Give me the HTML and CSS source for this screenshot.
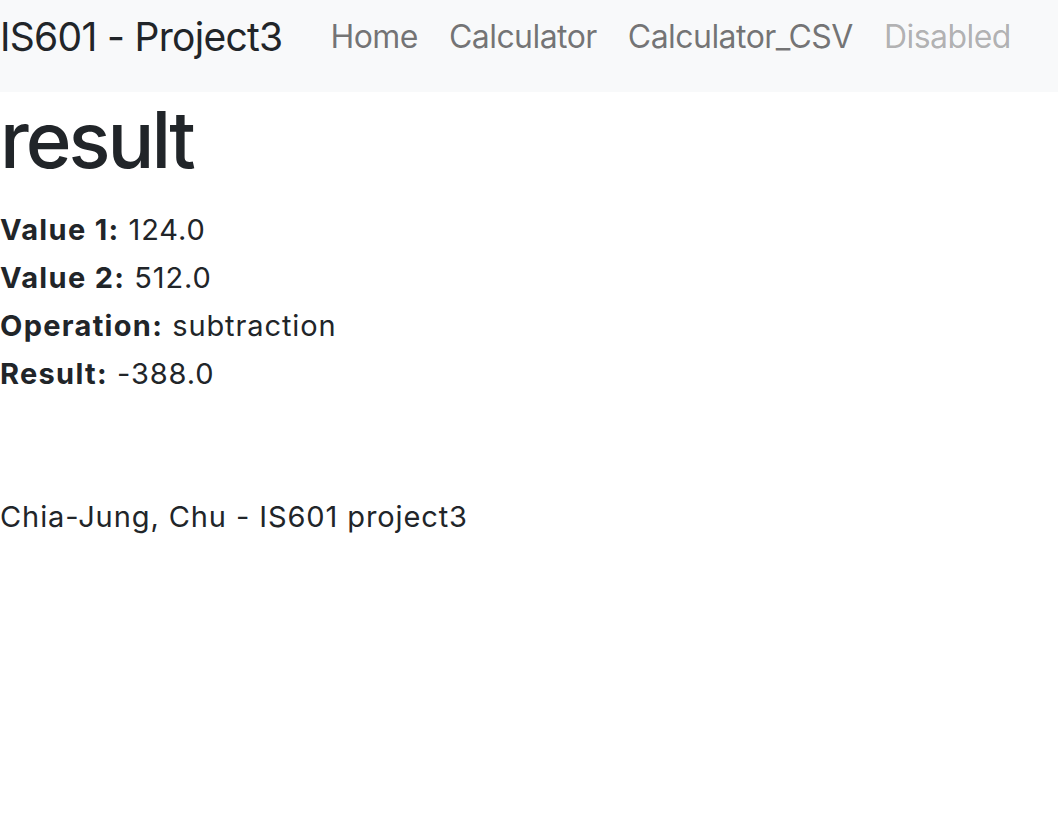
FILE: index.html
```html
<!DOCTYPE html>
<html lang="en">
<head>
<meta charset="utf-8">
<title>IS601 - Project3</title>
<link rel="stylesheet" href="styles.css">
</head>
<body>
<nav class="navbar">
  <a class="brand" href="#">IS601 - Project3</a>
  <ul class="nav">
    <li><a class="nav-link" href="#">Home</a></li>
    <li><a class="nav-link" href="#">Calculator</a></li>
    <li><a class="nav-link" href="#">Calculator_CSV</a></li>
    <li><a class="nav-link disabled" href="#">Disabled</a></li>
  </ul>
</nav>
<main class="content">
  <h1 class="title">result</h1>
  <div class="results">
    <div><b>Value 1:</b> 124.0</div>
    <div><b>Value 2:</b> 512.0</div>
    <div><b>Operation:</b> subtraction</div>
    <div><b>Result:</b> -388.0</div>
  </div>
  <footer class="footer">Chia-Jung, Chu - IS601 project3</footer>
</main>
</body>
</html>
```
FILE: styles.css
```css
html, body {
  margin: 0;
  padding: 0;
  background: #fff;
}
body {
  font-family: Inter, "Noto Sans", sans-serif;
  color: #212529;
  font-size: 29px;
  line-height: 48px;
  letter-spacing: 0.9px;
}
.navbar {
  display: flex;
  align-items: center;
  height: 92px;
  background: #f8f9fa;
  padding-bottom: 18px;
  box-sizing: border-box;
  letter-spacing: 0;
}
.brand {
  font-size: 39px;
  color: #212529;
  text-decoration: none;
  margin-right: 48px;
  letter-spacing: -0.7px;
}
.nav {
  display: flex;
  gap: 31px;
  list-style: none;
  margin: 0;
  padding: 0;
}
.nav-link {
  font-size: 32px;
  color: rgba(0, 0, 0, 0.55);
  text-decoration: none;
  letter-spacing: -0.55px;
}
.nav-link.disabled {
  color: rgba(0, 0, 0, 0.3);
}
.title {
  font-size: 78px;
  line-height: 96px;
  font-weight: 500;
  margin: 0 0 18px;
  letter-spacing: -3px;
}
.results b {
  font-weight: 700;
  letter-spacing: 1.3px;
}
.footer {
  margin-top: 95px;
}
```
